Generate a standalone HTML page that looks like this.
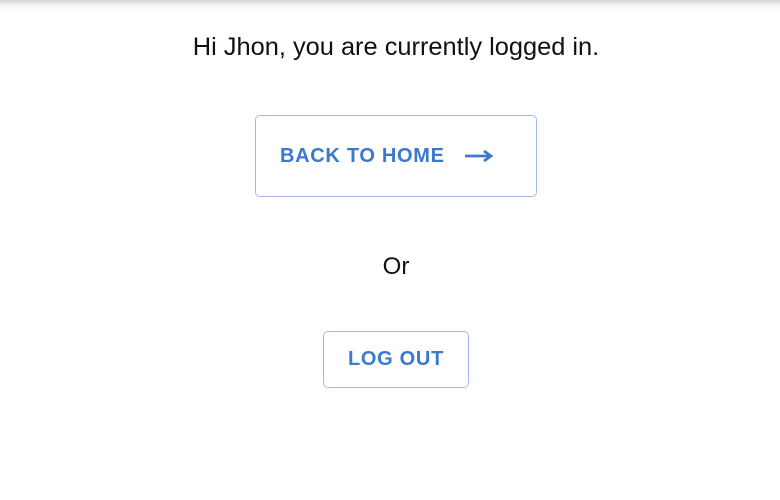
<!DOCTYPE html>
<html><head><style>
body{margin:0;width:780px;height:500px;background:#fff;font-family:"Liberation Sans",Arial,sans-serif;position:relative;overflow:hidden}
.sh{position:absolute;left:0;top:0;width:780px;height:12px;background:linear-gradient(#d6d6d6,#f4f4f4 50%,#fff)}
.t{position:absolute;left:6px;width:780px;text-align:center;color:#111}
.b{position:absolute;box-sizing:border-box;border:1px solid #a3b9ea;border-radius:5px;color:#3b79cc;font-size:20px;font-weight:bold;letter-spacing:0.7px;display:flex;align-items:center}
</style></head><body>
<div class="sh"></div>
<div class="t" style="top:33px;font-size:25.4px">Hi Jhon, you are currently logged in.</div>
<div class="b" style="left:255px;top:115px;width:282px;height:82px;padding-left:24px">BACK TO HOME
<svg width="28" height="14" style="margin-left:20px" viewBox="0 0 28 14"><path d="M0 7H24" stroke="#3b79cc" stroke-width="2.8"/><path d="M19 2L26 7L19 12" fill="none" stroke="#3b79cc" stroke-width="2.8"/></svg></div>
<div class="t" style="top:253px;font-size:24px">Or</div>
<div class="b" style="left:323px;top:331px;width:146px;height:57px;justify-content:center">LOG OUT</div>
</body></html>
